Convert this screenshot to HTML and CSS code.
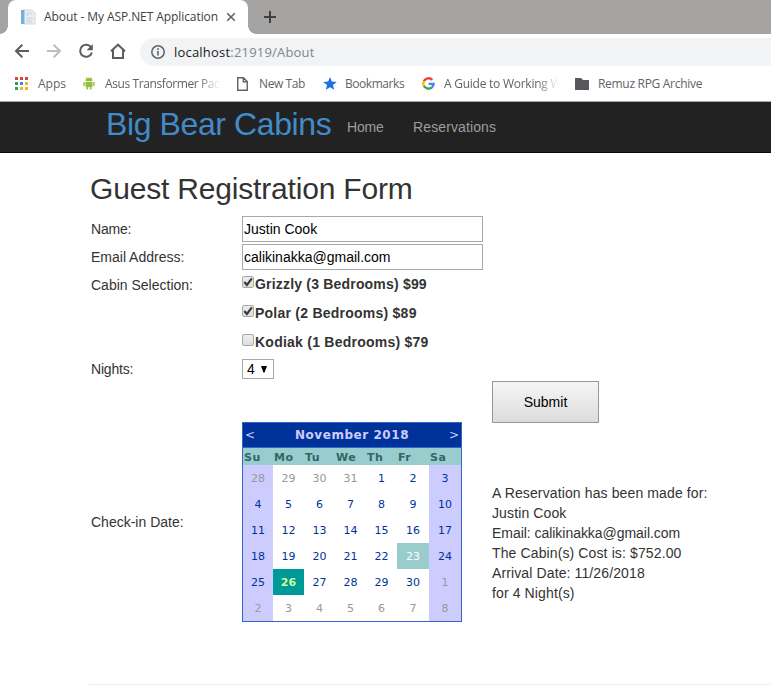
FILE: index.html
```html
<!DOCTYPE html>
<html lang="en">
<head>
<meta charset="utf-8">
<title>About - My ASP.NET Application</title>
<link rel="stylesheet" href="styles.css">
</head>
<body>
<header class="browser">
  <div class="tabstrip">
    <div class="tab">
      <svg class="favicon" width="16" height="16" viewBox="0 0 16 16"><path d="M3 1h9l3 3v11H3z" fill="#eef1f4" stroke="#cfd6de"/><path d="M1 1h3.500v14H1z" fill="#72b3dd"/><path d="M6 4h4M6 6h3M6 9h7M6 11h7M6 13h6" stroke="#c9d1da"/><path d="M9.500 3h3v3h-3z" fill="#d5e3ee"/></svg>
      <span class="tab-title">About - My ASP.NET Application</span>
      <svg class="tab-close" width="10" height="10" viewBox="0 0 10 10"><path d="M1.200 1.200l7.600 7.600M8.800 1.200L1.200 8.800" stroke="#5f6368" stroke-width="1.600"/></svg>
    </div>
    <svg class="new-tab" width="12" height="12" viewBox="0 0 12 12"><path d="M6 0v12M0 6h12" stroke="#3c4043" stroke-width="2"/></svg>
  </div>
  <div class="toolbar">
    <svg width="16" height="16" viewBox="0 0 16 16"><path d="M15 8H2.500M8.300 1.700L2 8l6.300 6.300" fill="none" stroke="#5a5e63" stroke-width="2"/></svg>
    <svg width="16" height="16" viewBox="0 0 16 16"><path d="M1 8h12.500M7.700 1.700L14 8l-6.300 6.300" fill="none" stroke="#bcbec0" stroke-width="2"/></svg>
    <svg width="16" height="16" viewBox="0 0 16 16"><path d="M13.300 4.700A6 6 0 1 0 13.900 9.500" fill="none" stroke="#5a5e63" stroke-width="2"/><path d="M14.800 1v6.200H8.600z" fill="#5a5e63"/></svg>
    <svg class="home" width="18" height="16" viewBox="0 0 18 16"><path d="M2 8.300L9 1.700l7 6.600M4 7v8h10V7" fill="none" stroke="#5a5e63" stroke-width="2"/></svg>
    <div class="address">
      <svg width="14" height="14" viewBox="0 0 14 14"><circle cx="7" cy="7" r="6.200" fill="none" stroke="#5f6368" stroke-width="1.500"/><path d="M7 6v4.500M7 3.200v1.700" stroke="#5f6368" stroke-width="1.600"/></svg>
      <span class="url"><b>localhost</b>:21919/About</span>
    </div>
  </div>
  <nav class="bookmarks">
    <a class="bm bm-apps"><svg width="13" height="13" viewBox="0 0 13 13"><path d="M0 0h3v3H0zM5 0h3v3H5zM10 0h3v3h-3z" fill="#d8443a"/><path d="M0 5h3v3H0zM0 10h3v3H0z" fill="#2f9e50"/><path d="M5 5h3v3H5z" fill="#3f82ee"/><path d="M10 5h3v3h-3zM5 10h3v3H5zM10 10h3v3h-3z" fill="#efb526"/></svg><span>Apps</span></a>
    <a class="bm bm-asus"><svg width="12" height="13" viewBox="0 0 12 13"><path d="M2.500 4a3.500 3.300 0 0 1 7 0zM2.500 4.700h7V10h-1v2.500H7V10.200H5v2.300H3.500V10h-1zM.4 4.900h1.400v4H.4zM10.200 4.900h1.400v4h-1.400z" fill="#97c03d"/><path d="M3 0l1.200 1.600M9 0L7.800 1.600" stroke="#97c03d" stroke-width=".7"/></svg><span>Asus Transformer Pac</span></a>
    <a class="bm bm-new"><svg width="11" height="14" viewBox="0 0 11 14"><path d="M.75.75h5.700l3.800 3.800v8.700H.75zM6.300.75v4h4" fill="none" stroke="#5f6368" stroke-width="1.400"/></svg><span>New Tab</span></a>
    <a class="bm bm-star"><svg width="14" height="13" viewBox="0 0 14 13"><path d="M7 0l1.800 4.500 5 .4-3.900 3.100 1.300 4.800L7 10.200l-4.200 2.600L4.100 8 .2 4.900l5-.4z" fill="#1a6fe8"/></svg><span>Bookmarks</span></a>
    <a class="bm bm-google"><svg width="13" height="13" viewBox="0 0 13 13" fill="none" stroke-width="2.400"><path d="M10.300 2.900A5.200 5.200 0 0 0 1.900 4.200" stroke="#ea4335"/><path d="M1.900 4.200a5.200 5.200 0 0 0 0 4.600" stroke="#fbbc05"/><path d="M1.900 8.800a5.200 5.200 0 0 0 8 1.600" stroke="#34a853"/><path d="M9.900 10.400a5 5 0 0 0 1.700-3.500H6.600" stroke="#4285f4"/></svg><span>A Guide to Working W</span></a>
    <a class="bm bm-folder"><svg width="14" height="12" viewBox="0 0 14 12"><path d="M0 0h6l2 2h6v10H0z" fill="#55575a"/></svg><span>Remuz RPG Archive</span></a>
  </nav>
</header>
<nav class="navbar">
  <a class="brand">Big Bear Cabins</a>
  <a class="nav-home">Home</a>
  <a class="nav-res">Reservations</a>
</nav>
<main class="page">
  <h2>Guest Registration Form</h2>
  <form class="form">
    <label class="l-name">Name:</label><div class="field">Justin Cook</div>
    <label>Email Address:</label><div class="field">calikinakka@gmail.com</div>
    <label>Cabin Selection:</label>
    <div class="cabins">
      <div class="cabin"><i class="box"><svg width="10" height="10" viewBox="0 0 9 9"><path d="M1.200 4.500l2.300 2.700L8 1.200" fill="none" stroke="#3c3c3c" stroke-width="2"/></svg></i><b>Grizzly (3 Bedrooms) $99</b></div>
      <div class="cabin"><i class="box"><svg width="10" height="10" viewBox="0 0 9 9"><path d="M1.200 4.500l2.300 2.700L8 1.200" fill="none" stroke="#3c3c3c" stroke-width="2"/></svg></i><b class="wide">Polar (2 Bedrooms) $89</b></div>
      <div class="cabin"><i class="box"></i><b class="wide">Kodiak (1 Bedrooms) $79</b></div>
    </div>
    <label class="l-nights">Nights:</label>
    <div class="select">4<svg width="6" height="7" viewBox="0 0 6 7"><path d="M0 0h6L3.600 6.500H2.400z" fill="#000"/></svg></div>
    <div class="submit">Submit</div>
    <label class="l-date">Check-in Date:</label>
    <div class="calendar">
      <div class="cal-head"><span>&lt;</span><b>November 2018</b><span>&gt;</span></div>
      <div class="cal-row days"><b>Su</b><b>Mo</b><b>Tu</b><b>We</b><b>Th</b><b>Fr</b><b>Sa</b></div>
      <div class="cal-row"><i class="o">28</i><i class="o">29</i><i class="o">30</i><i class="o">31</i><i>1</i><i>2</i><i>3</i></div>
      <div class="cal-row"><i>4</i><i>5</i><i>6</i><i>7</i><i>8</i><i>9</i><i>10</i></div>
      <div class="cal-row"><i>11</i><i>12</i><i>13</i><i>14</i><i>15</i><i>16</i><i>17</i></div>
      <div class="cal-row"><i>18</i><i>19</i><i>20</i><i>21</i><i>22</i><i class="today">23</i><i>24</i></div>
      <div class="cal-row"><i>25</i><i class="sel">26</i><i>27</i><i>28</i><i>29</i><i>30</i><i class="o">1</i></div>
      <div class="cal-row"><i class="o">2</i><i class="o">3</i><i class="o">4</i><i class="o">5</i><i class="o">6</i><i class="o">7</i><i class="o">8</i></div>
    </div>
    <div class="result">
      <div>A Reservation has been made for:</div>
      <div>Justin Cook</div>
      <div class="r-mail">Email: calikinakka@gmail.com</div>
      <div>The Cabin(s) Cost is: $752.00</div>
      <div>Arrival Date: 11/26/2018</div>
      <div>for 4 Night(s)</div>
    </div>
  </form>
  <hr>
</main>
</body>
</html>
```
FILE: styles.css
```css
* { box-sizing: border-box; }
body { margin: 0; height: 699px; overflow: hidden; background: #fff; color: #333; font: 14px/20px "Liberation Sans", Arial, sans-serif; }
svg { display: block; flex: none; }
.browser { font-family: "Open Sans", sans-serif; font-size: 12px; white-space: nowrap; }
.tabstrip { height: 34px; background: #a5a4a2; display: flex; align-items: center; }
.tab { width: 240px; height: 34px; margin-left: 8px; padding: 0 12px; background: #fff; border-radius: 8px 8px 0 0; display: flex; align-items: center; position: relative; }
.tab::before, .tab::after { content: ""; position: absolute; bottom: 0; width: 8px; height: 8px; }
.tab::before { left: -8px; background: radial-gradient(circle at 0 0, transparent 7.5px, #fff 8px); }
.tab::after { right: -8px; background: radial-gradient(circle at 100% 0, transparent 7.5px, #fff 8px); }
.tab-title { margin-left: 8px; width: 176px; color: #3c4043; letter-spacing: -.08px; }
.tab-close { margin-left: 7px; }
.new-tab { margin-left: 16px; }
.toolbar { height: 34px; display: flex; align-items: center; padding-left: 14px; gap: 16px; }
.home { margin-left: -1px; }
.address { flex: 1; height: 28px; margin: 2px 0 0 -3px; padding-left: 11px; border-radius: 14px 0 0 14px; background: #f1f3f4; display: flex; align-items: center; gap: 9px; }
.url { font-size: 13px; color: #80868b; letter-spacing: .2px; }
.url b { font-weight: 400; color: #202124; }
.bookmarks { height: 34px; display: flex; align-items: center; border-bottom: 1px solid #a8a8a8; padding: 0 0 2px 15px; color: #5f6368; }
.bm { display: flex; align-items: center; flex: none; }
.bm-apps { width: 68px; gap: 10px; }
.bm-asus { width: 154px; gap: 10px; letter-spacing: -.4px; }
.bm-new { width: 86px; gap: 11px; letter-spacing: -.4px; }
.bm-star { width: 99px; gap: 8px; letter-spacing: -.45px; }
.bm-google { width: 153px; gap: 9px; letter-spacing: -.25px; }
.bm-folder { gap: 9px; letter-spacing: -.3px; }
.bm-asus span, .bm-google span { width: 116px; -webkit-mask-image: linear-gradient(90deg, #000 80%, transparent 99%); mask-image: linear-gradient(90deg, #000 80%, transparent 99%); }
.navbar { height: 51px; background: #222; border-bottom: 1px solid #080808; display: flex; color: #9d9d9d; padding-left: 106px; }
.brand { width: 241px; font-size: 32px; line-height: 45px; color: #428bca; letter-spacing: -.4px; white-space: nowrap; }
.nav-home { width: 66px; line-height: 50px; letter-spacing: -.2px; }
.nav-res { line-height: 50px; letter-spacing: .12px; }
.page { padding-left: 90px; }
h2 { margin: 19px 0 11px; font-size: 30px; line-height: 33px; font-weight: 400; letter-spacing: -.18px; }
.form { display: grid; grid-template-columns: 151px 250px 240px; grid-template-rows: 28px 28px 87px 22px 41px 201px; margin-left: 1px; }
label { grid-column: 1; padding-top: 3px; }
.l-name, .l-nights { letter-spacing: -.2px; }
.field { grid-column: 2; width: 241px; height: 26px; border: 1px solid #a9a9a9; color: #000; line-height: 25px; padding-left: 1px; }
.cabins { grid-column: 2; }
.cabin { height: 29px; display: flex; }
.box { width: 12px; height: 12px; margin: 4px 1px 0 0; border: 1px solid #a9a9a9; border-radius: 2px; background: linear-gradient(#eee, #ddd); }
.cabin b { line-height: 25px; letter-spacing: .19px; }
.cabin .wide { letter-spacing: .24px; }
.l-nights { padding-top: 0; }
.select { width: 32px; height: 20px; border: 1px solid #a9a9a9; color: #000; padding-left: 4px; display: flex; align-items: center; gap: 6px; }
.submit { grid-column: 3; grid-row: 5; width: 107px; height: 42px; border: 1px solid #979797; background: linear-gradient(#f6f6f6, #dcdcdc); color: #000; line-height: 41px; text-align: center; }
.l-date { grid-row: 6; padding-top: 90px; }
.calendar { grid-row: 6; width: 220px; height: 200px; border: 1px solid #3366cc; font: 11px "DejaVu Sans", Verdana, sans-serif; color: #003399; }
.cal-head { height: 25px; background: #003399; color: #ccccff; display: flex; justify-content: space-between; align-items: center; padding: 0 2px; font-size: 12px; border-bottom: 1px solid #3366cc; }
.cal-head b { letter-spacing: .55px; }
.cal-row { display: grid; grid-template-columns: 30px 31px 31px 31px 31px 32px 32px; height: 26px; line-height: 28px; text-align: center; }
.cal-row i { font-style: normal; height: 26px; }
.cal-row i:first-child, .cal-row i:last-child { background: #ccccff; }
.days { height: 17px; line-height: 19px; background: #99cccc; color: #336666; text-align: left; padding-left: 1px; letter-spacing: .5px; }
.cal-row .o { color: #999; }
.cal-row .today { background: #99cccc; color: #fff; }
.cal-row .sel { background: #009999; color: #ccff99; font-weight: 700; }
.result { grid-column: 3; grid-row: 6; padding-top: 61px; white-space: nowrap; letter-spacing: .12px; }
.r-mail { letter-spacing: -.04px; }
hr { margin: 61px 0 0 -1px; border: 0; border-top: 1px solid #eee; }
```
